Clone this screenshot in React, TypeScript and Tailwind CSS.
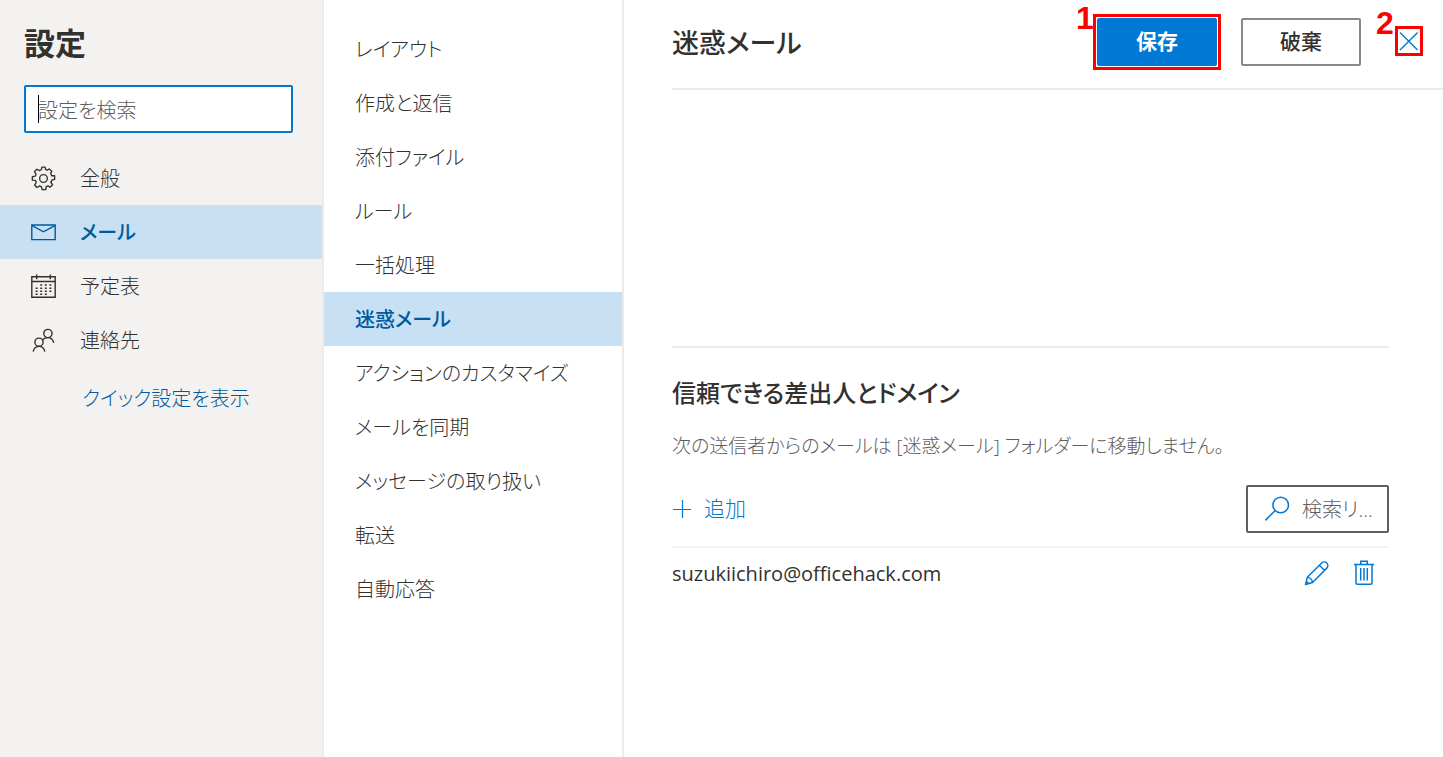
import { useState } from "react";
import type { ReactNode } from "react";

function GearIcon() {
  return (
    <svg width="25" height="25" viewBox="0 0 26 26" fill="none" stroke="currentColor" strokeWidth="1.4">
      <path
        strokeLinejoin="round"
        d="M10.9 3.6 L11.3 1.2 H14.7 L15.1 3.6 L16.9 4.4 L19 3 L21.6 5.5 L20.3 7.6 Q21 8.4 21.4 10.1 H24.6 V13.8 L21.6 14.6 Q21.4 16 20.6 16.9 L22.4 19.4 L19.8 22 L17.6 20.6 L15.8 21.4 L15.3 24.6 H11.6 L10.9 21.6 L9 20.7 L6.2 22.4 L3.8 19.8 L5.5 17 L4.6 15 L1.4 14.7 V11.2 L4.4 10.6 L5.3 8.6 L3.6 5.9 L6.1 3.4 L8.8 4.8 Z"
      />
      <circle cx="13" cy="13" r="4" />
    </svg>
  );
}

function MailIcon() {
  return (
    <svg width="25" height="25" viewBox="0 0 25 25" fill="none" stroke="currentColor" strokeWidth="1.4">
      <path d="M.8 5h23.400v14.600H.8z" />
      <path d="M1.200 5.700 12.500 11.800 23.800 5.700" />
    </svg>
  );
}

function CalendarIcon() {
  return (
    <svg width="25" height="25" viewBox="0 0 25 25" fill="none" stroke="currentColor" strokeWidth="1.4">
      <path d="M.8 2.700h23.400v20.600H.8zM.8 7.500h23.400M5.700 .5v4.800M19.300 .5v4.800" />
      <path strokeWidth="1.6" strokeDasharray="2 2.6" d="M9.200 11h12.600M4.600 14.200h16.800M4.600 17.200h16.800M4.600 20.200h12.200" />
    </svg>
  );
}

function PeopleIcon() {
  return (
    <svg width="25" height="25" viewBox="0 0 25 25" fill="none" stroke="currentColor" strokeWidth="1.4">
      <circle cx="16.900" cy="5.500" r="4.100" />
      <circle cx="8" cy="14.200" r="4.100" />
      <path d="M2.200 23.600c.6-3 3-5.200 5.800-5.200s5.200 2.200 5.800 5.200M11.800 11.800c1-1.600 2.800-2.200 5.100-2.200 2.800 0 5.200 2.200 5.800 5.200" />
    </svg>
  );
}

function CloseIcon() {
  return (
    <svg width="20" height="20" viewBox="0 0 20 20" fill="none" stroke="currentColor" strokeWidth="1.4">
      <path d="M1 1.500l17.600 17.600M18.600 1.500L1 19.100" />
    </svg>
  );
}

function PlusIcon() {
  return (
    <svg width="20" height="20" viewBox="0 0 20 20" fill="none" stroke="currentColor" strokeWidth="1.2">
      <path d="M1 10.500h18M10.500 1v18" />
    </svg>
  );
}

function SearchIcon() {
  return (
    <svg width="26" height="26" viewBox="0 0 26 26" fill="none" stroke="currentColor" strokeWidth="1.5">
      <circle cx="16.700" cy="9" r="7.800" />
      <path d="M11.200 14.500 1.300 24.400" />
    </svg>
  );
}

function PencilIcon() {
  return (
    <svg width="25" height="25" viewBox="0 0 26 26" fill="none" stroke="currentColor" strokeWidth="1.5">
      <path
        strokeLinejoin="round"
        d="M1.500 24.500 3.400 17 18.400 2.100a3.650 3.650 0 0 1 5.300 5.300L8.900 22.400zM3.400 17c2.800.2 5.100 2.500 5.500 5.400M16 4.500l5.300 5.300M2.500 21l2.500 2.500"
      />
    </svg>
  );
}

function TrashIcon() {
  return (
    <svg width="22" height="26" viewBox="0 0 22 26" fill="none" stroke="currentColor" strokeWidth="1.5">
      <path d="M1 4.500h20M7.800 4.500V1.300h6.400v3.200M3 4.500v18.200q0 1.500 1.500 1.500h13q1.500 0 1.500-1.500V4.500M7.700 8v12.500M11 8v12.500M14.300 8v12.500" />
    </svg>
  );
}

const CATEGORIES: { label: string; icon: ReactNode }[] = [
  { label: "全般", icon: <GearIcon /> },
  { label: "メール", icon: <MailIcon /> },
  { label: "予定表", icon: <CalendarIcon /> },
  { label: "連絡先", icon: <PeopleIcon /> },
];

const MAIL_SECTIONS = [
  "レイアウト",
  "作成と返信",
  "添付ファイル",
  "ルール",
  "一括処理",
  "迷惑メール",
  "アクションのカスタマイズ",
  "メールを同期",
  "メッセージの取り扱い",
  "転送",
  "自動応答",
];

function Sidebar() {
  const [active, setActive] = useState("メール");
  return (
    <aside className="w-[324px] shrink-0 border-r-2 border-[#edebe9] bg-[#f3f2f1]">
      <h1 className="px-6 pt-5 text-[31px] leading-[46px] font-bold">設定</h1>
      <div className="relative mt-[19px] mr-[29px] ml-6">
        <input
          type="text"
          aria-label="設定を検索"
          placeholder="設定を検索"
          className="h-12 w-full rounded-xs border-2 border-[#0078d4] bg-white px-3 pt-0.5 text-[20px] font-light outline-none placeholder:text-[#605e5c]"
        />
        <span className="absolute top-[10px] left-[14px] h-7 w-px bg-black" />
      </div>
      <nav className="mt-[18px]">
        {CATEGORIES.map(({ label, icon }) => (
          <button
            key={label}
            type="button"
            onClick={() => setActive(label)}
            className={
              label === active
                ? "flex h-[54px] w-full items-center gap-6 bg-[#c7e0f4] px-[31px] text-[20px] font-medium text-[#005a9e]"
                : "flex h-[54px] w-full items-center gap-6 px-[31px] text-[20px] font-light"
            }
          >
            {icon}
            <span className="pt-0.5">{label}</span>
          </button>
        ))}
      </nav>
      <a href="#quick" className="mt-[17px] ml-[82px] block text-[20px] leading-[30px] font-light text-[#005a9e]">
        クイック設定を表示
      </a>
    </aside>
  );
}

function SectionList() {
  const [active, setActive] = useState("迷惑メール");
  return (
    <nav className="w-[300px] shrink-0 border-r-2 border-[#edebe9] pt-[22px]">
      {MAIL_SECTIONS.map((label) => (
        <button
          key={label}
          type="button"
          onClick={() => setActive(label)}
          className={
            label === active
              ? "block h-[54px] w-full bg-[#c7e0f4] px-[31px] pt-0.5 text-left text-[20px] font-medium text-[#005a9e]"
              : "block h-[54px] w-full px-[31px] pt-0.5 text-left text-[20px] font-light"
          }
        >
          {label}
        </button>
      ))}
    </nav>
  );
}

function Header() {
  return (
    <header className="flex h-[90px] items-start border-b-2 border-[#edebe9] pr-5">
      <h2 className="mt-5 flex-1 text-[27px] leading-[46px] font-medium">迷惑メール</h2>
      <div className="relative mt-[14px] border-3 border-[#ff0000] p-px">
        <span className="absolute -top-[15px] -left-5 font-['Liberation_Sans',sans-serif] text-[32px] leading-8 font-bold text-[#ff0000]">
          1
        </span>
        <button type="button" className="block h-12 w-[120px] rounded-xs bg-[#0078d4] text-[21px] font-bold text-white">
          保存
        </button>
      </div>
      <button
        type="button"
        className="mt-[18px] ml-5 h-12 w-[120px] rounded-xs border-2 border-[#8a8886] text-[21px] font-medium"
      >
        破棄
      </button>
      <div className="relative mt-[26px] ml-[34px] border-3 border-[#ff0000]">
        <span className="absolute -top-[22px] -left-[22px] font-['Liberation_Sans',sans-serif] text-[32px] leading-8 font-bold text-[#ff0000]">
          2
        </span>
        <button
          type="button"
          aria-label="閉じる"
          className="flex h-6 w-[22px] items-center justify-center text-[#0078d4]"
        >
          <CloseIcon />
        </button>
      </div>
    </header>
  );
}

function TrustedSenders() {
  return (
    <section className="mt-64 mr-[54px] border-t-2 border-[#edebe9] pt-[26px]">
      <h3 className="text-[24px] leading-[38px] font-medium">信頼できる差出人とドメイン</h3>
      <p className="mt-[19px] text-[19px] leading-[30px] font-light text-[#605e5c]">
        次の送信者からのメールは [迷惑メール] フォルダーに移動しません。
      </p>
      <div className="mt-6 flex items-center justify-between">
        <button type="button" className="flex items-center gap-3 text-[21px] font-light text-[#0078d4]">
          <PlusIcon />
          追加
        </button>
        <label className="flex h-12 w-[143px] items-center gap-3 rounded-xs border-2 border-[#605e5c] pl-4">
          <span className="shrink-0 text-[#0078d4]">
            <SearchIcon />
          </span>
          <input
            type="text"
            aria-label="検索リスト"
            placeholder="検索リ..."
            className="w-full min-w-0 pt-0.5 text-[20px] font-light outline-none placeholder:text-[#605e5c]"
          />
        </label>
      </div>
      <ul className="mt-[13px] border-t-2 border-[#f3f2f1]">
        <li className="flex h-[50px] items-center">
          <span className="flex-1 pt-0.5 text-[20px]">suzukiichiro@officehack.com</span>
          <button type="button" aria-label="編集" className="mr-6 text-[#0078d4]">
            <PencilIcon />
          </button>
          <button type="button" aria-label="削除" className="mr-[14px] text-[#0078d4]">
            <TrashIcon />
          </button>
        </li>
      </ul>
    </section>
  );
}

export default function App() {
  return (
    <div className="flex min-h-screen bg-white font-['Open_Sans','Noto_Sans_CJK_JP',sans-serif] text-[#323130] [font-feature-settings:'palt']">
      <Sidebar />
      <SectionList />
      <main className="min-w-0 flex-1 pl-12">
        <Header />
        <TrustedSenders />
      </main>
    </div>
  );
}
